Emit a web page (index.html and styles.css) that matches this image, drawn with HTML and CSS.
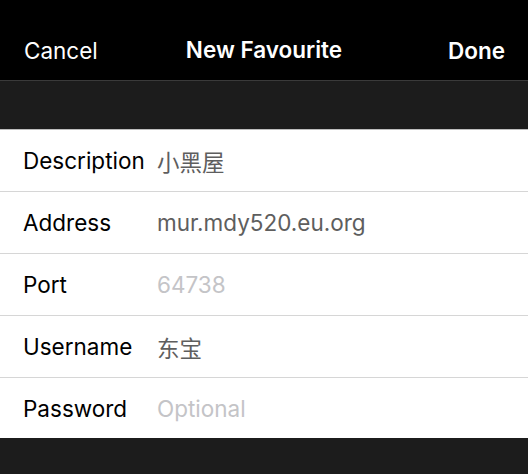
FILE: index.html
```html
<!DOCTYPE html>
<html>
<head>
<meta charset="utf-8">
<link rel="stylesheet" href="styles.css">
</head>
<body>
<div class="nav">
  <span class="nav-btn">Cancel</span>
  <span class="nav-title">New Favourite</span>
  <span class="nav-btn done">Done</span>
</div>
<div class="spacer"></div>
<div class="form">
  <div class="row"><span class="label">Description</span><span class="value">小黑屋</span></div>
  <div class="row"><span class="label">Address</span><span class="value">mur.mdy520.eu.org</span></div>
  <div class="row"><span class="label">Port</span><span class="value placeholder">64738</span></div>
  <div class="row"><span class="label">Username</span><span class="value">东宝</span></div>
  <div class="row"><span class="label">Password</span><span class="value placeholder">Optional</span></div>
</div>
<div class="footer"></div>
</body>
</html>
```
FILE: styles.css
```css
html, body {
  margin: 0;
  padding: 0;
  background: #1c1c1c;
  font-family: Inter, "Noto Sans CJK SC", sans-serif;
}
.nav {
  height: 60px;
  padding: 20px 23px 0 24px;
  background: #000;
  border-bottom: 1px solid #3a3a3a;
  display: flex;
  align-items: center;
  justify-content: space-between;
  color: #fff;
  font-size: 22.5px;
  position: relative;
}
.nav-btn {
  font-weight: 400;
}
.nav-btn.done {
  font-weight: 600;
}
.nav-title {
  position: absolute;
  left: 0;
  right: 0;
  top: 20px;
  height: 60px;
  line-height: 60px;
  text-align: center;
  font-weight: 600;
  pointer-events: none;
}
.spacer {
  height: 48px;
  background: #1c1c1c;
  border-bottom: 1px solid #bdbdbd;
}
.form {
  background: #fff;
}
.row {
  height: 61px;
  display: flex;
  align-items: center;
  border-bottom: 1px solid #d6d6d6;
  font-size: 22.5px;
}
.row:last-child {
  border-bottom: none;
  height: 60px;
}
.label {
  width: 134px;
  padding-left: 23px;
  color: #000;
}
.value {
  color: #5e5e5e;
}
.value.placeholder {
  color: #c4c4c7;
}
.footer {
  height: 36px;
  background: #1c1c1c;
}
```
